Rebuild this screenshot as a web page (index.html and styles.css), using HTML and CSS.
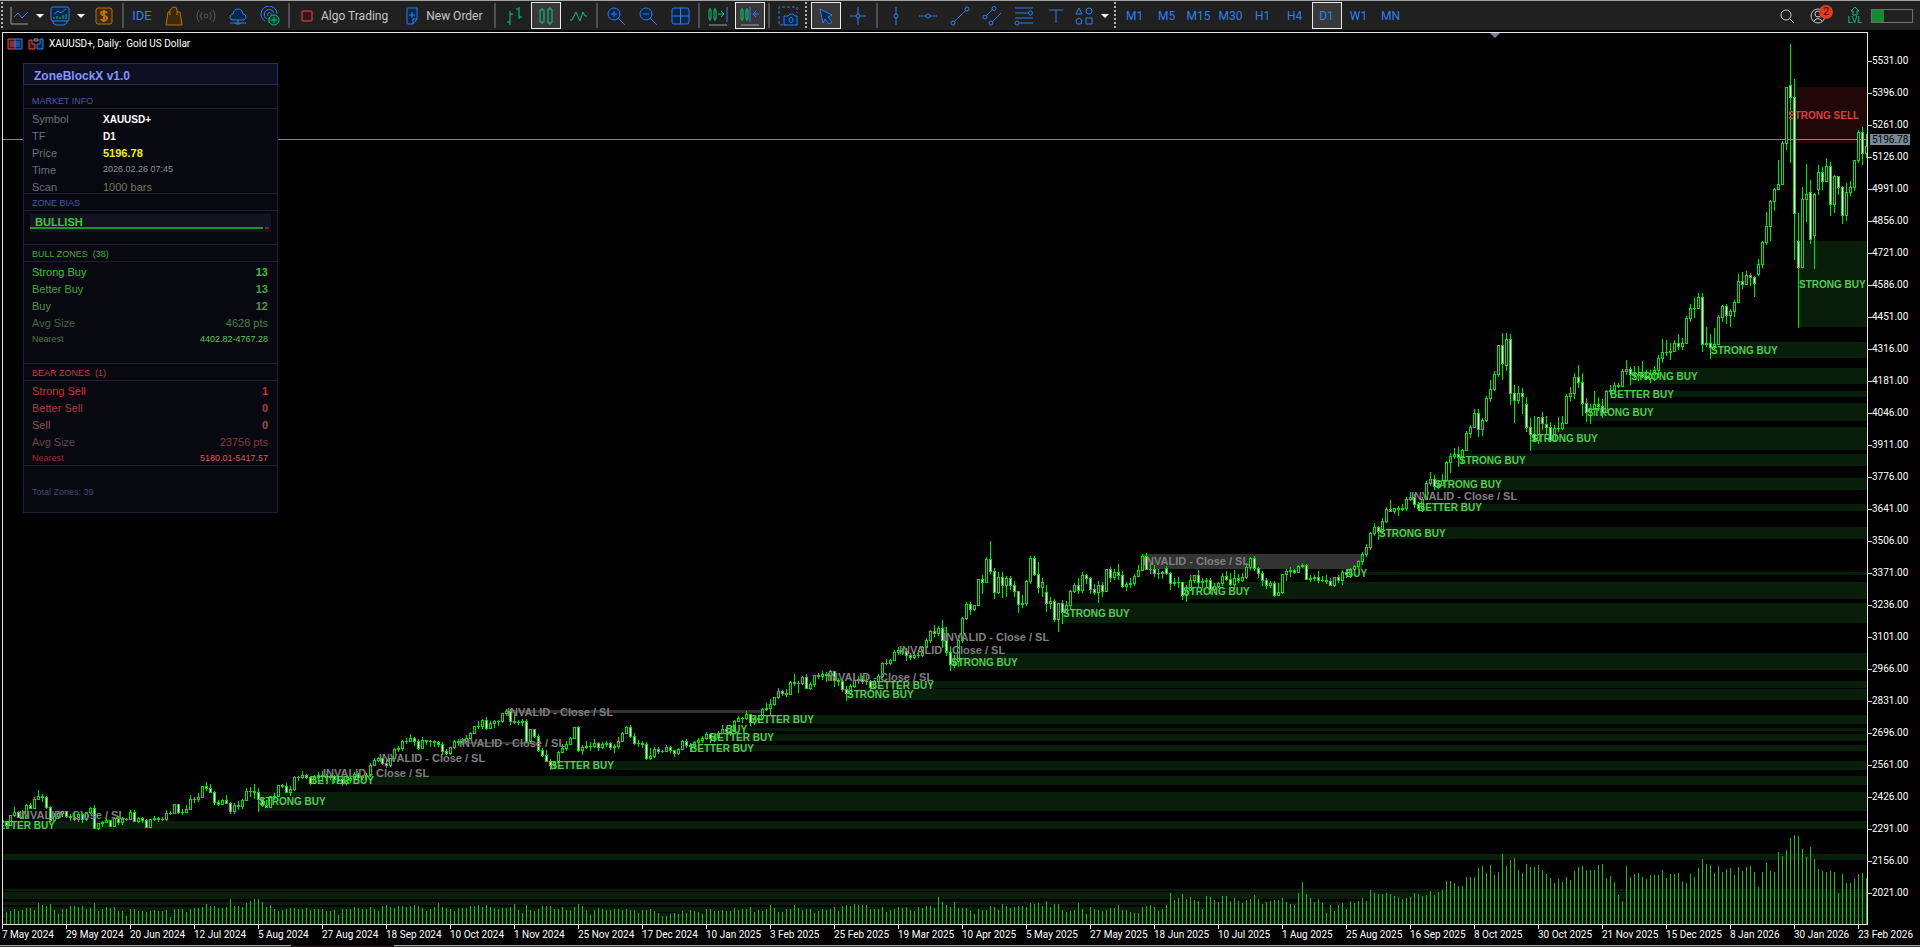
FILE: index.html
```
<!DOCTYPE html>
<html lang="en">
<head>
    <meta charset="UTF-8">
    <meta name="viewport" content="width=device-width, initial-scale=1.0">
    <title>XAUUSD+, Daily</title>
    <link rel="stylesheet" href="styles.css">
</head>
<body>
    <!-- Toolbar -->
    <header class="toolbar">
        <span class="grip"></span>
        <button class="tool split" aria-label="Chart type">
            <svg class="icon" viewBox="0 0 20 20"><path class="grey" d="M2 1v17h17"/><path d="M5 11l4-4 4 5 6-6"/></svg>
            <span class="caret"></span>
        </button>
        <button class="tool split" aria-label="Indicators">
            <svg class="icon" viewBox="0 0 20 20"><rect x="1" y="1" width="18" height="14" rx="2" class="fill"/><path d="M3 15v2l3 2h8l3-2v-2M4 8l4-3 3 2 5-4"/><path class="green" d="M4 13v-2M7 13v-3M10 13v-2M13 13V9M16 13V8"/></svg>
            <span class="caret"></span>
        </button>
        <button class="tool" aria-label="Trade">
            <svg class="icon orange" viewBox="0 0 20 20"><rect x="2" y="2" width="16" height="16" rx="2"/><path stroke-width="2" d="M13 7c-1-2-6-2-6 0 0 3 6 2 6 5 0 3-5 3-6 1M10 4v12"/></svg>
        </button>
        <span class="sep"></span>
        <button class="tool ide">IDE</button>
        <button class="tool" aria-label="Market">
            <svg class="icon orange" viewBox="0 0 20 20"><path d="M4 6h12l2 13H2z"/><path d="M6 9V4q2-3 4-3 3 0 3 3v5"/></svg>
        </button>
        <button class="tool" aria-label="Signals">
            <svg class="icon dim" viewBox="0 0 20 20"><circle cx="10" cy="10" r="2"/><path d="M6 6q-3 4 0 8M14 6q3 4 0 8M3 4q-4 6 0 12M17 4q4 6 0 12"/></svg>
        </button>
        <button class="tool" aria-label="Hosting">
            <svg class="icon" viewBox="0 0 20 20"><path class="fill" d="M4 14q-3-1-2-4 1-2 3-2 1-5 5-5t5 5q3 0 3 3 0 2-2 3z"/><path d="M10 14v3M2 17h16M8 17v1h4v-1"/></svg>
        </button>
        <button class="tool" aria-label="Copy trading">
            <svg class="icon" viewBox="0 0 20 20"><path d="M5 15A8 8 0 1 1 17 8M7 13a5 5 0 1 1 7-6M8 10a2 2 0 1 1 3 0M9 11v6"/><circle class="green gfill" cx="14" cy="14" r="5"/><path class="green" d="M14 11v6M11 14h6"/></svg>
        </button>
        <span class="sep"></span>
        <button class="tool wide">
            <svg class="small" viewBox="0 0 12 14"><rect class="red" x="1" y="2" width="10" height="10" rx="1"/></svg>Algo Trading
        </button>
        <button class="tool wide">
            <svg class="small" viewBox="0 0 12 18"><path class="fill" d="M2 1h9v11l-4 5H2q-1 0-1-1V2q0-1 1-1zM11 12H7v5"/><path d="M6 5v6M3 8h6"/></svg>New Order
        </button>
        <span class="sep"></span>
        <button class="tool" aria-label="Bar chart">
            <svg class="icon green" viewBox="0 0 20 20"><path d="M6 5v14M6 8h3M3 16h3M15 1v12M12 3h3M15 11h3"/></svg>
        </button>
        <button class="tool active" aria-label="Candlesticks">
            <svg class="icon green" viewBox="0 0 20 20"><path d="M4 4h4v12H4zM12 3h4v14h-4zM6 2v2M6 16v2M14 1v2M14 17v2"/></svg>
        </button>
        <button class="tool" aria-label="Line chart">
            <svg class="icon green" viewBox="0 0 20 20"><path d="M2 14h2l4-8 4 9 3-9 2 4h2"/></svg>
        </button>
        <span class="sep"></span>
        <button class="tool" aria-label="Zoom in">
            <svg class="icon" viewBox="0 0 20 20"><circle class="fill" cx="8" cy="8" r="6"/><path d="M5 8h6M8 5v6M12 12l7 7"/></svg>
        </button>
        <button class="tool" aria-label="Zoom out">
            <svg class="icon" viewBox="0 0 20 20"><circle class="fill" cx="8" cy="8" r="6"/><path d="M5 8h6M12 12l7 7"/></svg>
        </button>
        <button class="tool" aria-label="Tile windows">
            <svg class="icon" viewBox="0 0 20 20"><rect class="fill" x="2" y="2" width="17" height="16" rx="2"/><path d="M10.500 2v16M2 10h17"/></svg>
        </button>
        <span class="sep"></span>
        <button class="tool" aria-label="Auto scroll">
            <svg class="icon" viewBox="0 0 20 20"><path class="green" d="M1 4h2v9H1zM6 4h2v9H6zM2 2v2M2 13v2M7 2v2M7 13v2M10 8h6M13 5l3 3-3 3"/><path d="M19 1v15"/><path class="grey" d="M1 19h18"/></svg>
        </button>
        <button class="tool active" aria-label="Chart shift">
            <svg class="icon" viewBox="0 0 20 20"><path class="green" d="M1 4h2v9H1zM6 4h2v9H6zM2 2v2M2 13v2M7 2v2M7 13v2"/><path d="M10 1v15M19 8h-6M16 5l-3 3 3 3"/><path class="grey" d="M1 19h18"/></svg>
        </button>
        <span class="sep"></span>
        <button class="tool" aria-label="Screenshot">
            <svg class="icon" viewBox="0 0 20 20"><path stroke-dasharray="3 2" d="M5 19H1V1h18v6"/><path class="fill" d="M6 10h4l2-2h3l2 2h2v9H6z"/><ellipse cx="13" cy="14" rx="2" ry="2.500"/></svg>
        </button>
        <span class="grip"></span>
        <button class="tool active" aria-label="Cursor">
            <svg class="icon" viewBox="0 0 20 20"><path class="fill" d="M4 3l12 6-4 2 4 5-3 2-4-5-2 4z"/></svg>
        </button>
        <button class="tool" aria-label="Crosshair">
            <svg class="icon" viewBox="0 0 20 20"><path d="M10 1v7M10 12v7M2 10h6M12 10h6"/><circle cx="10" cy="10" r="2"/></svg>
        </button>
        <span class="sep"></span>
        <button class="tool" aria-label="Vertical line">
            <svg class="icon" viewBox="0 0 20 20"><path d="M10 1v7M10 12v7"/><circle cx="10" cy="10" r="2"/></svg>
        </button>
        <button class="tool" aria-label="Horizontal line">
            <svg class="icon" viewBox="0 0 20 20"><path d="M1 10h7M12 10h7"/><circle cx="10" cy="10" r="2"/></svg>
        </button>
        <button class="tool" aria-label="Trend line">
            <svg class="icon" viewBox="0 0 20 20"><path d="M4 16L16 4"/><circle cx="3" cy="17" r="2"/><circle cx="17" cy="3" r="2"/></svg>
        </button>
        <button class="tool" aria-label="Channel">
            <svg class="icon" viewBox="0 0 20 20"><path d="M4 10l7-7M10 16l9-9"/><circle cx="3" cy="11" r="2"/><circle cx="12" cy="2.500" r="2"/><circle cx="9" cy="17" r="2"/></svg>
        </button>
        <button class="tool" aria-label="Fibonacci">
            <svg class="icon" viewBox="0 0 20 20"><path d="M1 2h18M1 7h13M1 12h18M5 17h14"/><circle cx="16.500" cy="7" r="2"/><circle cx="3" cy="17" r="2"/></svg>
        </button>
        <button class="tool" aria-label="Text">
            <svg class="icon" viewBox="0 0 20 20"><path d="M3 4h14M10 4v13"/></svg>
        </button>
        <button class="tool split" aria-label="Shapes">
            <svg class="icon" viewBox="0 0 20 20"><path d="M5 2l3 6H2zM12 12h6v6h-6zM5 12l3 2-1 4H3l-1-4z"/><circle cx="15" cy="5" r="3"/></svg>
            <span class="caret"></span>
        </button>
        <span class="grip"></span>
        <button class="tool tf">M1</button>
        <button class="tool tf">M5</button>
        <button class="tool tf">M15</button>
        <button class="tool tf">M30</button>
        <button class="tool tf">H1</button>
        <button class="tool tf">H4</button>
        <button class="tool tf active">D1</button>
        <button class="tool tf">W1</button>
        <button class="tool tf">MN</button>
        <div class="status">
            <button class="tool" aria-label="Search">
                <svg class="icon light" viewBox="0 0 20 20"><circle cx="9" cy="9" r="5"/><path d="M13 13l4 4"/></svg>
            </button>
            <button class="tool" aria-label="Account">
                <svg class="icon light" viewBox="0 0 20 20"><circle cx="9" cy="10" r="7"/><circle cx="9" cy="8" r="3"/><path d="M5 15q4-5 8 0"/></svg>
                <span class="badge">2</span>
            </button>
            <span class="level">
                <svg viewBox="0 0 10 10" class="green"><path d="M5 1l4 4H7v4H3V5H1z"/></svg>
                LVL
            </span>
            <span class="battery"><i></i></span>
        </div>
    </header>

    <main class="window">
        <div class="plot">
            <svg id="chart"></svg>
            <span class="shift"></span>
            <div class="title">
                <svg viewBox="0 0 16 12"><path class="red" d="M8 1H1v10h7M3 4h5M3 6h5M3 8h5"/><path class="fill" d="M8 1h7v10H8zM8 4h5M8 6h5M8 8h5"/></svg>
                <svg viewBox="0 0 16 12"><path class="red" d="M4 2H1v9h6V6H4z"/><path class="fill" d="M12 1h3v10H9V6h3z"/><path class="grey" d="M6 1h4v2H6z"/></svg>
                <h1>XAUUSD+, Daily:&nbsp; Gold US Dollar</h1>
            </div>

            <!-- Indicator panel -->
            <aside class="panel">
                <h2>ZoneBlockX v1.0</h2>
                <h3 class="first">MARKET INFO</h3>
                <dl class="info tight">
                    <div><dt>Symbol</dt><dd class="white">XAUUSD+</dd></div>
                    <div><dt>TF</dt><dd class="white">D1</dd></div>
                    <div><dt>Price</dt><dd class="price">5196.78</dd></div>
                    <div><dt>Time</dt><dd class="time">2026.02.26 07:45</dd></div>
                    <div><dt>Scan</dt><dd class="scan">1000 bars</dd></div>
                </dl>
                <h3>ZONE BIAS</h3>
                <div class="bias">
                    <div class="bias-box">
                        <strong>BULLISH</strong>
                        <div class="meter"><i class="up"></i><i class="down"></i></div>
                    </div>
                </div>
                <h3 class="bull">BULL ZONES&nbsp; (38)</h3>
                <dl class="zones bull">
                    <div class="strong"><dt>Strong Buy</dt><dd>13</dd></div>
                    <div class="better"><dt>Better Buy</dt><dd>13</dd></div>
                    <div class="plain"><dt>Buy</dt><dd>12</dd></div>
                    <div class="avg"><dt>Avg Size</dt><dd>4628 pts</dd></div>
                    <div class="near"><dt>Nearest</dt><dd>4402.82-4767.28</dd></div>
                </dl>
                <h3 class="bear">BEAR ZONES&nbsp; (1)</h3>
                <dl class="zones bear tight">
                    <div class="strong"><dt>Strong Sell</dt><dd>1</dd></div>
                    <div class="better"><dt>Better Sell</dt><dd>0</dd></div>
                    <div class="plain"><dt>Sell</dt><dd>0</dd></div>
                    <div class="avg"><dt>Avg Size</dt><dd>23756 pts</dd></div>
                    <div class="near"><dt>Nearest</dt><dd>5180.01-5417.57</dd></div>
                </dl>
                <p class="total">Total Zones: 39</p>
            </aside>
        </div>
        <div class="price-axis">
            <ul id="prices"></ul>
            <span class="tag">5196.78</span>
        </div>
    </main>
    <ul class="time-axis" id="dates"></ul>
    <footer class="tabs"><span></span></footer>
    <script src="chart.js"></script>
</body>
</html>
```
FILE: styles.css
```
* {
    box-sizing: border-box;
}
body {
    margin: 0;
    height: 100vh;
    display: flex;
    flex-direction: column;
    overflow: hidden;
    background: #000;
    color: #fff;
    font-family: "Liberation Sans", Arial, sans-serif;
    font-size: 11px;
}
ul, dl, dd, h1, h2, h3, p {
    margin: 0;
    padding: 0;
    list-style: none;
}
svg {
    fill: none;
    stroke: #2f7fee;
}

/* Toolbar */
.toolbar {
    display: flex;
    align-items: center;
    flex: none;
    height: 30px;
    background: #202020;
    border-top: 1px solid #a0a0a0;
    font-family: Roboto, "Open Sans", sans-serif;
    font-size: 12px;
}
.grip {
    flex: none;
    width: 6px;
    height: 28px;
    background: repeating-linear-gradient(#b0b0b0 0 2px, transparent 2px 4px) 1px 0 / 2px 100% no-repeat;
}
.sep {
    flex: none;
    width: 2px;
    height: 25px;
    margin: 0 2px;
    background: #505050;
}
.tool {
    flex: none;
    display: flex;
    align-items: center;
    justify-content: center;
    position: relative;
    width: 30px;
    height: 27px;
    margin: 0 1px;
    padding: 0;
    border: 1px solid transparent;
    background: none;
    color: #2f7fee;
    font: inherit;
}
.tool.active {
    background: #383838;
    border-color: #e8e8e8;
}
.tool.split {
    width: 40px;
    margin: 0 1px 0 0;
    gap: 7px;
}
.tool.wide {
    width: auto;
    margin: 0;
    padding: 0 8px;
    gap: 8px;
    color: #c8c8c8;
}
.tool.ide {
    font-size: 13px;
}
.icon {
    flex: none;
    width: 20px;
    height: 20px;
}
.small {
    width: 12px;
    height: 18px;
}
.caret {
    border: 4px solid transparent;
    border-top-color: #fff;
    border-bottom: 0;
}
.fill {
    fill: #06264a;
}
.green {
    stroke: #0ec27a;
}
.gfill {
    fill: #0a3a2a;
}
.orange {
    stroke: #b8730a;
    fill: #3d2a0a;
}
.red {
    stroke: #f04848;
    fill: #3c1515;
}
.grey {
    stroke: #a0a0a0;
}
.dim {
    stroke: #5a5a5a;
}
.light {
    stroke: #c8c8c8;
}
.status {
    display: flex;
    align-items: center;
    margin-left: auto;
    padding-right: 7px;
}
.badge {
    position: absolute;
    top: 2px;
    right: 0;
    width: 14px;
    height: 14px;
    border-radius: 50%;
    background: #e03c20;
    color: #400;
    font-size: 11px;
    line-height: 14px;
}
.level {
    display: flex;
    flex-direction: column;
    align-items: center;
    width: 32px;
    margin-left: 4px;
    color: #0ec27a;
    font-size: 9px;
    line-height: 9px;
}
.level svg {
    width: 10px;
    height: 10px;
}
.battery {
    width: 42px;
    height: 14px;
    border: 1px solid #707070;
}
.battery i {
    display: block;
    width: 12px;
    height: 12px;
    background: #168a34;
}

/* Chart window */
.window {
    display: flex;
    flex: 1;
    min-height: 0;
    padding: 2px 0 0 2px;
}
.plot {
    position: relative;
    flex: 1;
    min-width: 0;
    border: 1px solid #e6e6e6;
    overflow: hidden;
}
#chart {
    display: block;
    width: 100%;
    height: 100%;
    stroke: none;
    font-size: 10px;
    font-weight: bold;
}
#chart path, #chart rect {
    shape-rendering: crispEdges;
}
.zone-buy {
    fill: #081e0a;
}
.zone-sell {
    fill: #200808;
}
.zone-invalid {
    fill: #333;
}
.lime {
    fill: #00e600;
}
.hollow {
    fill: #000;
}
.solid {
    fill: #fff;
}
.volume {
    fill: #28b428;
}
.bid {
    fill: #778899;
}
.label-buy {
    fill: #57c957;
}
.label-sell {
    fill: #d84040;
}
.label-invalid {
    fill: #808080;
    font-size: 11px;
}
.shift {
    position: absolute;
    top: 0;
    right: 367px;
    border: 5px solid transparent;
    border-top-color: #778899;
    border-bottom: 0;
}
.title {
    position: absolute;
    top: 5px;
    left: 4px;
    display: flex;
    align-items: center;
    gap: 5px;
}
.title svg {
    width: 16px;
    height: 12px;
}
.title h1 {
    font: 10px/12px Roboto, "Open Sans", sans-serif;
}

/* Indicator panel */
.panel {
    position: absolute;
    top: 30px;
    left: 20px;
    width: 255px;
    height: 450px;
    background: #080810;
    border: 1px solid #1e1e37;
    color: #6e7080;
}
.panel h2 {
    height: 22px;
    margin: -1px -1px 0;
    padding-left: 10px;
    border: 1px solid #2c2c58;
    background: #0f0f23;
    color: #8296ff;
    font-size: 12px;
    line-height: 24px;
}
.panel h3 {
    height: 17px;
    padding-left: 8px;
    border-bottom: 1px solid #1e1e37;
    color: #465aaa;
    font-size: 9px;
    font-weight: normal;
    line-height: 18px;
}
.panel h3.first {
    margin-top: 7px;
}
.panel h3.bull {
    color: #46aa46;
}
.panel h3.bear {
    color: #be4040;
}
.panel dl {
    height: 102px;
    padding: 2px 9px 0 8px;
    border-bottom: 1px solid #1e1e37;
}
.panel dl.tight {
    height: 85px;
}
.panel dl div {
    display: flex;
    height: 17px;
    line-height: 17px;
}
.info dt {
    width: 71px;
}
.info .white {
    color: #fff;
    font-size: 10px;
    font-weight: bold;
}
.info .price {
    color: #f5f500;
    font-weight: bold;
}
.info .time {
    color: #909090;
    font-size: 9px;
    line-height: 15px;
}
.info .scan {
    color: #78785a;
}
.bias {
    height: 34px;
    padding: 3px 6px;
    border-bottom: 1px solid #1e1e37;
}
.bias-box {
    height: 18px;
    background: #141420;
}
.bias-box strong {
    display: block;
    height: 13px;
    padding-left: 5px;
    color: #3cc83c;
    line-height: 17px;
}
.meter {
    display: flex;
    gap: 2px;
    padding-right: 2px;
}
.meter i {
    height: 2px;
}
.meter .up {
    flex: 1;
    background: #1e9628;
}
.meter .down {
    width: 4px;
    background: #8c2323;
}
.zones div {
    justify-content: space-between;
}
.zones dd {
    font-weight: bold;
}
.zones .avg dd, .zones .near dd {
    font-weight: normal;
}
.zones .near {
    font-size: 9px;
    line-height: 15px;
}
.bull .strong { color: #32c832; }
.bull .better { color: #46a546; }
.bull .plain { color: #509650; }
.bull .avg { color: #466446; }
.bull .avg dd { color: #468246; }
.bull .near { color: #328c32; }
.bull .near dd { color: #5ac85a; }
.bear .strong { color: #d22d2d; }
.bear .better { color: #aa3c3c; }
.bear .plain { color: #965050; }
.bear .avg { color: #644646; }
.bear .avg dd { color: #823c3c; }
.bear .near { color: #963232; }
.bear .near dd { color: #dc5a5a; }
.panel .total {
    padding: 20px 8px;
    color: #46466e;
    font-size: 9px;
    line-height: 12px;
}

/* Axes */
.price-axis {
    position: relative;
    flex: none;
    width: 52px;
    padding-top: 13px;
    font: 10px/32px Roboto, "Open Sans", sans-serif;
}
.price-axis li {
    display: flex;
    align-items: center;
    height: 32px;
}
.price-axis li::before {
    content: "";
    width: 4px;
    height: 1px;
    background: #e6e6e6;
}
.tag {
    position: absolute;
    top: 102px;
    left: 2px;
    width: 40px;
    padding-left: 2px;
    background: #778899;
    color: #000;
    line-height: 11px;
}
.time-axis {
    display: flex;
    flex: none;
    height: 20px;
    padding-left: 2px;
    overflow: hidden;
    font: 10px/18px Roboto, "Open Sans", sans-serif;
    white-space: nowrap;
}
.time-axis li {
    flex: none;
    width: 64px;
    background: linear-gradient(#e6e6e6, #e6e6e6) 0 0 / 1px 4px no-repeat;
    padding-top: 1px;
}
.tabs {
    flex: none;
    height: 2px;
    padding-left: 291px;
    border-top: 1px solid #a8a0a8;
    background: #303030;
}
.tabs span {
    display: block;
    width: 103px;
    height: 2px;
    margin-top: -1px;
    background: #181214;
}
```
FILE: chart.js
```
// one candle every 4px: high low close [open], open defaults to the previous close
const candles = `
820 824 822,822 829 825,815 825 815,807 817 812,811 818 817,810 819 818,804 815 805,803 809 808,797 809 799,790 800 796,794 802 797,796 809 807,806 822 820,813 821 816,811 818 813,811 817 811,
811 818 816,814 821 817,812 821 819,813 822 814,813 823 819,815 821 812,807 814 808,805 829 828,823 830 823,821 827 822,818 823 820,820 827 826,817 827 818,816 825 822,817 825 819,818 821 819,
810 820 812,810 822 821,817 823 818,817 823 820,819 828 827,819 828 819,816 821 818,817 822 819,817 821 819,810 821 813,811 815 813,804 814 804,804 814 812,809 815 812,805 812 809,795 810 799,
797 803 799,793 802 797,786 798 786,782 791 788,784 793 792,791 805 802,800 806 804,799 804 800,795 804 803,802 814 811,803 814 805,801 810 806,799 809 800,788 801 791,787 797 791,784 799 792,
788 812 799,797 807 805,800 808 807,796 808 796,793 800 796,785 797 785,784 788 786,783 793 792,786 796 789,776 791 777,776 781 777,771 779 775,774 779 777,776 785 783,775 783 777,772 780 775,
771 782 776,774 781 777,775 780 776,775 783 779,777 782 779,776 786 783,776 785 780,776 783 778,772 779 774,773 781 777,775 780 776,773 780 775,763 777 765,758 766 760,757 762 758,759 765 763,
758 768 765,759 767 758,748 759 749,746 752 748,740 751 741,738 744 741,734 742 738,737 746 741,739 750 748,737 749 740,740 745 741,740 747 741,740 747 742,741 747 744,742 755 751,749 755 753,
747 755 747,740 749 741,739 746 742,738 745 741,735 742 738,732 739 733,726 734 726,721 729 726,719 729 720,717 730 728,721 728 723,720 728 721,720 726 721,713 723 713,709 716 711,709 725 721,
712 724 722,720 725 722,719 726 721,719 743 741,729 744 729,729 738 736,734 752 750,748 757 755,750 762 761,759 770 765,761 768 762,751 763 752,744 753 748,741 751 744,737 744 738,727 739 727,
726 752 750,745 755 747,741 749 746,742 751 746,739 748 743,742 751 747,742 749 744,741 747 743,742 750 747,744 753 746,737 749 741,732 742 733,726 734 727,725 738 736,733 745 743,740 747 743,
741 748 744,742 760 758,748 760 756,747 758 749,747 754 751,750 753 751,745 752 747,746 753 750,750 757 753,748 755 749,740 750 741,739 748 745,743 752 746,741 749 742,738 745 740,736 743 738,
732 740 734,733 743 738,735 742 737,731 739 733,725 734 729,727 735 731,727 736 731,720 732 721,716 722 718,717 723 718,711 720 714,715 726 722,717 725 719,716 722 718,708 719 709,703 711 708,
699 715 704,697 706 697,688 699 691,690 696 693,689 697 694,681 695 682,674 686 683,681 693 683,676 685 677,674 689 688,682 690 684,675 687 675,673 679 676,671 680 674,672 682 675,670 681 671,
671 687 680,678 686 681,679 692 689,686 701 693,684 695 686,678 688 680,676 684 679,676 684 681,675 685 681,680 690 687,680 689 681,674 683 676,662 678 663,659 665 663,659 665 660,650 661 652,
647 655 650,648 655 651,648 661 655,653 660 657,651 659 655,650 658 655,646 657 647,638 648 640,630 643 631,625 637 633,626 636 628,620 648 640,627 656 652,646 671 664,655 668 661,635 667 640,
617 643 618,602 620 604,602 615 609,605 611 605,579 606 579,575 594 582,557 583 559,541 574 571,568 599 592,572 594 577,572 598 585,576 597 578,576 590 585,581 597 591,591 613 604,595 608 603,
580 606 581,556 584 558,556 576 574,562 593 587,578 597 582,585 612 603 592,597 609 601,599 622 619,603 632 603,600 624 612,601 614 605,590 610 591,583 593 585,578 594 590,572 593 575,574 584 578,
577 594 589,584 595 592,581 603 585,582 597 591,569 591 569,567 582 577,569 580 572,564 580 575,571 588 586,582 591 584,578 588 583,574 586 576,565 577 570,554 571 556,553 570 569,564 574 569,
565 577 573,569 579 573,571 579 572,566 575 573 568,572 590 583,578 586 582,577 588 582,582 600 595,585 602 590,575 590 580,575 583 575,570 588 582,578 588 581,578 588 580,578 594 589,583 593 586,
582 588 583,573 586 576,571 581 579,573 586 584,570 588 578,574 583 580,573 582 577,563 579 567,557 570 558,556 571 568,567 578 573,571 586 580,578 589 585,581 588 583,581 597 595,583 596 592,
574 594 574,569 581 571,567 577 570,569 574 572,565 573 566,563 568 565,564 580 579,575 582 578,575 581 577,571 583 580,576 582 580,575 584 581,578 586 585,577 587 577,575 583 580,570 585 572,
569 578 574,568 578 569,565 571 566,560 570 561,552 565 554,544 557 547,532 550 533,523 536 527,526 540 531,518 532 521,507 523 509,500 512 511,508 514 508,506 516 509,504 511 508,497 511 499,
492 501 497,494 508 504,502 511 508,497 512 499,481 500 483,472 486 479,475 490 486,480 489 485,474 486 480,461 482 462,453 473 456,448 459 454,447 467 457,449 464 450,431 451 433,425 438 427,
409 428 413,409 437 429,418 436 420,396 422 398,380 402 389,371 391 374,345 377 345,333 380 363,333 371 339 365,334 405 393,385 423 400,386 404 393,388 414 396,397 432 427 404,418 451 434,416 442 440,
417 444 417,412 430 423,416 434 427 424,422 442 440,425 441 428,417 432 428,416 430 423,394 424 396,387 401 393,373 399 377,365 388 382,373 416 403,398 422 412,404 424 409,391 416 404,397 411 406,
399 418 412,390 411 391,385 395 390,382 393 385,383 388 386,369 387 371,360 375 369,367 385 374,366 378 375,366 381 374,361 378 376,370 380 378,370 383 374,366 381 370,355 378 358,339 363 352,
340 356 352,343 360 351,340 352 343,334 350 346,338 350 343,316 344 318,304 322 308,298 318 308,293 309 297,293 352 344,327 347 343,334 359 347,328 349 344,315 342 317,305 322 306,304 324 315,
309 327 311,300 317 302,274 302 281,272 289 284,271 284 275,273 286 277,276 297 283,259 276 264 274,241 268 242,212 245 226,200 241 201,188 211 189,160 189 184,141 184 143,87 150 87,44 163 97 85,
79 260 213,213 328 267 241,187 266 199,164 222 194,180 244 239 192,193 269 194 235,165 195 172 189,167 190 181,158 182 166,162 216 204,175 213 176,177 195 187,186 224 215,183 221 192,181 196 187,160 191 160,
130 163 132,127 165 153,134 158 146`;

const volumes = `
12 12 13 15 13 14 16 16 14 21 19 18 20 14 10 15 15 18 18 17 18 15 16 21 13 15 17 16 17 13 13 8
15 15 13 13 12 13 14 13 13 14 7 15 15 15 12 15 16 16 17 20 18 18 16 16 17 25 18 18 17 21 23 25
25 22 17 19 15 13 14 15 16 16 15 15 16 14 15 15 15 13 13 14 9 15 15 15 17 16 15 15 17 15 13 18
19 17 16 18 18 17 18 19 18 16 13 15 17 21 17 16 15 13 16 16 16 18 18 19 17 19 17 16 15 16 16 17
20 14 11 19 14 13 15 18 18 18 15 15 17 14 14 17 20 18 14 9 14 16 15 14 14 15 15 14 15 14 14 11
14 14 15 13 11 8 8 10 11 10 13 11 14 13 12 10 15 15 13 13 14 13 13 16 14 15 15 17 12 14 13 15
19 16 12 12 15 15 19 16 14 15 15 11 13 15 14 15 17 13 18 19 18 20 19 19 19 15 15 15 17 12 14 15
17 16 17 14 13 17 16 18 18 16 27 22 19 17 22 16 16 16 13 10 15 14 14 18 17 14 20 18 16 17 18 18
17 21 20 21 18 23 17 20 20 14 12 13 14 21 15 10 17 15 14 13 14 16 16 19 14 14 12 11 11 17 18 19
17 13 15 19 31 24 26 30 25 27 24 23 15 28 27 24 22 28 28 23 26 23 21 24 25 29 25 20 22 23 24 24
26 22 20 19 31 42 30 26 22 25 21 11 19 13 19 21 15 23 21 23 26 23 34 31 30 30 31 30 28 27 25 26
27 31 30 28 29 33 29 32 34 43 43 41 38 38 47 47 47 56 58 51 59 49 52 70 58 64 66 54 51 60 57 57
59 54 50 46 41 45 42 47 44 53 57 58 54 54 54 59 60 46 48 42 29 23 58 47 50 51 47 45 49 49 49 54
46 50 50 51 42 41 50 47 56 65 60 59 51 58 52 55 56 49 57 53 57 58 52 37 52 61 53 52 72 68 74 86
89 88 75 67 77 65 55 53 52 53 52 31 50 41 41 45 50 51 46`;

// left, top, bottom (buy zones run to the right edge)
const buyZones = [
    [1799, 241, 327], [1711, 342, 358], [1631, 368, 384], [1611, 391, 397], [1587, 403, 421],
    [1531, 427, 450], [1459, 454, 466], [1435, 478, 490], [1419, 504, 511], [1379, 527, 539],
    [1350, 572, 575], [1183, 582, 599], [1063, 603, 623], [951, 653, 670], [871, 681, 688],
    [847, 689, 700], [750, 715, 724], [726, 728, 731], [711, 734, 741], [691, 745, 751],
    [551, 761, 770], [310, 776, 785], [259, 792, 811], [0, 821, 829], [0, 854, 860],
    [0, 889, 891], [0, 892, 899], [0, 902, 905], [0, 907, 912], [0, 913, 918], [0, 920, 924]
];
const invalidZones = [[1143, 554, 569, 1362], [505, 710, 713, 762], [458, 742, 744, 536], [943, 627, 647, 946]];

// type, left, middle
const labels = [
    ['STRONG SELL', 1788, 115], ['STRONG BUY', 1799, 284], ['STRONG BUY', 1711, 350], ['STRONG BUY', 1631, 376],
    ['BETTER BUY', 1610, 394], ['STRONG BUY', 1587, 412], ['STRONG BUY', 1531, 438], ['STRONG BUY', 1459, 460],
    ['STRONG BUY', 1435, 484], ['INVALID', 1411, 496], ['BETTER BUY', 1418, 507], ['STRONG BUY', 1379, 533],
    ['BUY', 1346, 573], ['INVALID', 1143, 561], ['STRONG BUY', 1183, 591], ['STRONG BUY', 1063, 613],
    ['INVALID', 943, 637], ['INVALID', 899, 650], ['STRONG BUY', 951, 662], ['INVALID', 827, 677],
    ['BETTER BUY', 870, 685], ['STRONG BUY', 847, 694], ['INVALID', 507, 712], ['BETTER BUY', 750, 719],
    ['BUY', 726, 729], ['BETTER BUY', 710, 737], ['BETTER BUY', 690, 748], ['INVALID', 459, 743],
    ['BETTER BUY', 550, 765], ['INVALID', 379, 758], ['INVALID', 323, 773], ['BETTER BUY', 310, 780],
    ['STRONG BUY', 259, 801], ['INVALID', 19, 815], ['BETTER BUY', -9, 825]
];

const dates = ['7 May 2024', '29 May 2024', '20 Jun 2024', '12 Jul 2024', '5 Aug 2024', '27 Aug 2024', '18 Sep 2024',
    '10 Oct 2024', '1 Nov 2024', '25 Nov 2024', '17 Dec 2024', '10 Jan 2025', '3 Feb 2025', '25 Feb 2025',
    '19 Mar 2025', '10 Apr 2025', '5 May 2025', '27 May 2025', '18 Jun 2025', '10 Jul 2025', '1 Aug 2025',
    '25 Aug 2025', '16 Sep 2025', '8 Oct 2025', '30 Oct 2025', '21 Nov 2025', '15 Dec 2025', '8 Jan 2026',
    '30 Jan 2026', '23 Feb 2026'];

const right = 1867;
const bottom = 924;

function box(x, y, w, h) {
    return `M${x} ${y}h${w}v${h}h${-w}z`;
}

function drawChart() {
    const svg = document.getElementById('chart');
    let zones = `<rect class="zone-sell" x="1794" y="87" width="73" height="56"/>`;
    for (const [x, top, low] of buyZones) {
        zones += `<rect class="zone-buy" x="${x}" y="${top}" width="${right - x}" height="${low - top}"/>`;
    }
    for (const [x, top, low, end] of invalidZones) {
        zones += `<rect class="zone-invalid" x="${x}" y="${top}" width="${end - x}" height="${low - top}"/>`;
    }

    let volume = '';
    volumes.trim().split(/\s+/).forEach((v, i) => {
        volume += box(2 + i * 4, bottom - v, 1, +v);
    });

    let lime = '', hollow = '', solid = '';
    let last = 820;
    candles.trim().split(',').forEach((row, i) => {
        const [high, low, close, open = last] = row.trim().split(' ').map(Number);
        const x = 2 + i * 4;
        const top = Math.min(open, close);
        const size = Math.abs(close - open) + 1;
        lime += box(x, high, 1, low - high) + box(x - 1, top, 3, size);
        if (size > 2) {
            const inner = box(x, top + 1, 1, size - 2);
            if (close > open) solid += inner;
            else hollow += inner;
        }
        last = close;
    });

    let text = '';
    for (const [name, x, y] of labels) {
        const kind = name === 'INVALID' ? 'invalid' : name.endsWith('SELL') ? 'sell' : 'buy';
        text += `<text class="label-${kind}" x="${x}" y="${y + 4}">${kind === 'invalid' ? 'INVALID - Close / SL' : name}</text>`;
    }

    // the newest bar stays on the right edge
    const dx = svg.clientWidth - right;
    const dy = svg.clientHeight - bottom;
    svg.innerHTML = `<g transform="translate(${dx} ${dy})">${zones}
        <path class="volume" d="${volume}"/>
        <rect class="bid" x="0" y="139" width="${right}" height="1"/>
        <path class="lime" d="${lime}"/><path class="hollow" d="${hollow}"/><path class="solid" d="${solid}"/>
        ${text}</g>`;
}

function drawAxes() {
    let prices = '';
    for (let p = 5531; p >= 2021; p -= 135) {
        prices += `<li>${p.toFixed(2)}</li>`;
    }
    document.getElementById('prices').innerHTML = prices;
    document.getElementById('dates').innerHTML = dates.map(d => `<li>${d}</li>`).join('');
}

drawAxes();
drawChart();
window.addEventListener('resize', drawChart);
```
